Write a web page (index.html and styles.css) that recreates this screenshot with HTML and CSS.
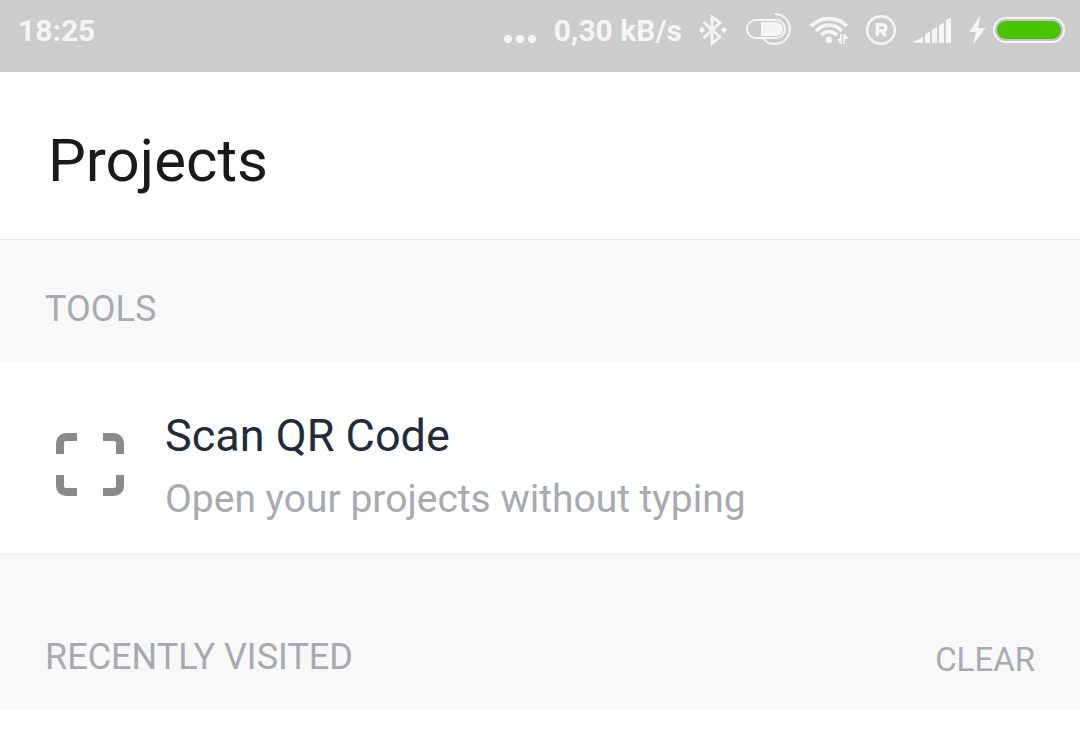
FILE: index.html
```html
<!DOCTYPE html>
<html lang="en">
<head>
<meta charset="utf-8">
<meta name="viewport" content="width=device-width, initial-scale=1">
<title>Projects</title>
<link rel="stylesheet" href="styles.css">
</head>
<body>
<div class="status-bar">
  <time class="clock">18:25</time>
  <div class="indicators">
    <svg class="icon" width="37" height="60" viewBox="502 0 37 60" aria-hidden="true">
      <g fill="#f5f5f5"><circle cx="509" cy="39" r="4.200"/><circle cx="521" cy="39" r="4.200"/><circle cx="533" cy="39" r="4.200"/></g>
    </svg>
    <span class="speed">0,30 kB/s</span>
    <svg class="icon" width="31" height="60" viewBox="698 0 31 60" aria-hidden="true">
      <path d="M703.500 22 720 37.200 712 43.200V16.800L720 22.800 703.500 38" fill="none" stroke="#f5f5f5" stroke-width="2.800"/>
      <path d="M702 26.800 705.200 30 702 33.200 698.800 30ZM724 26.800 727.200 30 724 33.200 720.800 30Z" fill="#f5f5f5"/>
    </svg>
    <svg class="icon" width="47" height="60" viewBox="745 0 47 60" aria-hidden="true">
      <rect x="747" y="20" width="38" height="18" rx="9" fill="none" stroke="#f5f5f5" stroke-width="2"/>
      <path d="M761 22h15a7 7 0 0 1 0 14h-15Z" fill="#f5f5f5"/>
      <path d="M775 14A15 15 0 1 1 763.500 38.800" fill="none" stroke="#f5f5f5" stroke-width="2"/>
    </svg>
    <svg class="icon" width="41" height="60" viewBox="808 0 41 60" aria-hidden="true">
      <g fill="none" stroke="#f5f5f5" stroke-width="3.800">
        <path d="M811 26A25.500 25.500 0 0 1 847 26"/>
        <path d="M816.200 31A17 17 0 0 1 841.800 31"/>
        <path d="M821.200 35.300A10 10 0 0 1 836.800 35.300"/>
      </g>
      <circle cx="829" cy="40" r="3.300" fill="#f5f5f5"/>
      <path d="M840 34h1.700v10H840.500L837.200 39H840ZM843.300 34h1.700l3.800 5H845v5h-1.700Z" fill="#f5f5f5"/>
    </svg>
    <svg class="icon" width="32" height="60" viewBox="865 0 32 60" aria-hidden="true">
      <circle cx="881" cy="30" r="13.800" fill="none" stroke="#f5f5f5" stroke-width="2.500"/>
      <path d="M877.300 36V24.700h5.500a2.900 2.900 0 0 1 0 6h-5.500M881.500 30.500l4 5.500" fill="none" stroke="#f5f5f5" stroke-width="3.500"/>
    </svg>
    <svg class="icon" width="39" height="60" viewBox="913 0 39 60" aria-hidden="true">
      <path d="M914 43v-1.500L923 37v6ZM925 43v-9l5-2.500V43ZM932 43V30l5-3v16ZM939 43V25.500l5-3V43ZM946 43V20l5-2.500V43Z" fill="#f5f5f5"/>
    </svg>
    <div class="power">
      <svg class="icon" width="18" height="60" viewBox="968 0 18 60" aria-hidden="true">
        <path d="M980.500 15.500 969 32h7l-3 12.500L985.500 28h-7.300Z" fill="#f5f5f5"/>
      </svg>
      <svg class="icon" width="72" height="60" viewBox="993 0 72 60" aria-hidden="true">
        <rect x="994" y="18" width="70" height="24" rx="12" fill="#c4c1c7" stroke="#f5f5f5" stroke-width="2"/>
        <rect x="997" y="21" width="64" height="18" rx="9" fill="#47c300"/>
      </svg>
    </div>
  </div>
</div>
<header class="header">
  <h1 class="title">Projects</h1>
</header>
<main>
  <section>
    <div class="section-head">
      <h2 class="section-title">TOOLS</h2>
    </div>
    <button class="tool" type="button">
      <svg class="icon" width="68" height="68" viewBox="56 432 68 68" aria-hidden="true">
        <g fill="none" stroke="#8a8a8a" stroke-width="8">
          <path d="M60 454V443a6 6 0 0 1 6-6H77M103 437H114a6 6 0 0 1 6 6V454M60 475V486a6 6 0 0 0 6 6H77M103 492H114a6 6 0 0 0 6-6V475"/>
        </g>
      </svg>
      <span class="tool-text">
        <span class="tool-name">Scan QR Code</span>
        <span class="tool-note">Open your projects without typing</span>
      </span>
    </button>
  </section>
  <section>
    <div class="section-head section-head-spaced">
      <h2 class="section-title">RECENTLY VISITED</h2>
      <button class="clear" type="button">CLEAR</button>
    </div>
  </section>
</main>
</body>
</html>
```
FILE: styles.css
```css
* {
  box-sizing: border-box;
}

body {
  margin: 0;
  background: #fff;
  font-family: Roboto, "Liberation Sans", sans-serif;
  text-rendering: optimizeLegibility;
}

button {
  padding: 0;
  border: 0;
  background: none;
  font-family: inherit;
  cursor: pointer;
}

.icon {
  display: block;
  flex: none;
}

.status-bar {
  display: flex;
  justify-content: space-between;
  padding: 0 15px 10px 18px;
  background: #ccc;
  color: #f5f5f5;
  font-size: 30px;
  font-weight: 700;
  line-height: 62px;
  white-space: nowrap;
}

.indicators {
  display: flex;
  gap: 16px;
}

.power {
  display: flex;
  gap: 7px;
}

.header {
  padding: 54px 48px 43px;
  border-bottom: 1px solid #e8e8e8;
}

.title {
  margin: 0;
  color: #1a1a1a;
  font-size: 60px;
  font-weight: 400;
  line-height: 70px;
}

.section-head {
  display: flex;
  justify-content: space-between;
  align-items: flex-end;
  padding: 48px 45px 31px;
  background: #f8f8f8;
}

.section-head-spaced {
  padding-top: 81px;
}

.section-title {
  margin: 0;
  color: #a7aab0;
  font-size: 36px;
  font-weight: 400;
  line-height: 42px;
}

.tool {
  display: flex;
  align-items: center;
  gap: 41px;
  width: 100%;
  padding: 49px 45px 31px 56px;
  border-bottom: 2px solid #f1f1f1;
  text-align: left;
}

.tool-text {
  display: flex;
  flex-direction: column;
  gap: 14px;
}

.tool-name {
  color: #232b3a;
  font-size: 45px;
  line-height: 52px;
}

.tool-note {
  color: #a7aab0;
  font-size: 39px;
  line-height: 46px;
}

.clear {
  color: #a7aab0;
  font-size: 33px;
  line-height: 36px;
}
```
